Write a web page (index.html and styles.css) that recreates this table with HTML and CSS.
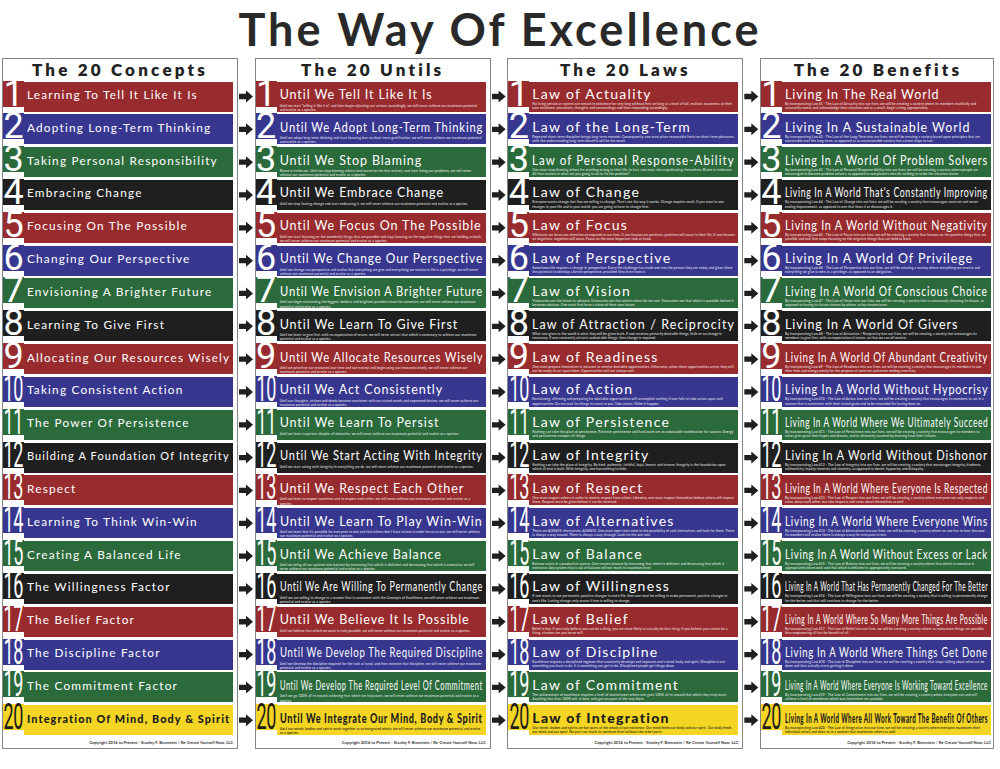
FILE: index.html
```html
<!DOCTYPE html>
<html lang="en">
<head>
<meta charset="utf-8">
<title>The Way Of Excellence</title>
<link rel="stylesheet" href="styles.css">
</head>
<body>
<h1 class="title">The Way Of Excellence</h1>
<div class="poster">

<section class="panel concepts">
<h2 class="ph">The 20 Concepts</h2>
<div class="rows">
<div class="row red"><div class="num">1</div><div class="body"><div class="t">Learning To Tell It Like It Is</div></div></div>
<div class="row blue"><div class="num">2</div><div class="body"><div class="t">Adopting Long-Term Thinking</div></div></div>
<div class="row green"><div class="num">3</div><div class="body"><div class="t">Taking Personal Responsibility</div></div></div>
<div class="row black"><div class="num">4</div><div class="body"><div class="t">Embracing Change</div></div></div>
<div class="row red"><div class="num">5</div><div class="body"><div class="t">Focusing On The Possible</div></div></div>
<div class="row blue"><div class="num">6</div><div class="body"><div class="t">Changing Our Perspective</div></div></div>
<div class="row green"><div class="num">7</div><div class="body"><div class="t">Envisioning A Brighter Future</div></div></div>
<div class="row black"><div class="num">8</div><div class="body"><div class="t">Learning To Give First</div></div></div>
<div class="row red"><div class="num">9</div><div class="body"><div class="t">Allocating Our Resources Wisely</div></div></div>
<div class="row blue"><div class="num n2"><span>10</span></div><div class="body"><div class="t">Taking Consistent Action</div></div></div>
<div class="row green"><div class="num n2"><span>11</span></div><div class="body"><div class="t">The Power Of Persistence</div></div></div>
<div class="row black"><div class="num n2"><span>12</span></div><div class="body"><div class="t">Building A Foundation Of Integrity</div></div></div>
<div class="row red"><div class="num n2"><span>13</span></div><div class="body"><div class="t">Respect</div></div></div>
<div class="row blue"><div class="num n2"><span>14</span></div><div class="body"><div class="t">Learning To Think Win-Win</div></div></div>
<div class="row green"><div class="num n2"><span>15</span></div><div class="body"><div class="t">Creating A Balanced Life</div></div></div>
<div class="row black"><div class="num n2"><span>16</span></div><div class="body"><div class="t">The Willingness Factor</div></div></div>
<div class="row red"><div class="num n2"><span>17</span></div><div class="body"><div class="t">The Belief Factor</div></div></div>
<div class="row blue"><div class="num n2"><span>18</span></div><div class="body"><div class="t">The Discipline Factor</div></div></div>
<div class="row green"><div class="num n2"><span>19</span></div><div class="body"><div class="t">The Commitment Factor</div></div></div>
<div class="row yellow"><div class="num n2"><span>20</span></div><div class="body"><div class="t">Integration Of Mind, Body &amp; Spirit</div></div></div>
</div>
<p class="copy">Copyright 2016 to Present - Stanley F. Bronstein / Re-Create Yourself Now, LLC</p>
</section>

<div class="arrows">
<i></i><i></i><i></i><i></i><i></i><i></i><i></i><i></i><i></i><i></i>
<i></i><i></i><i></i><i></i><i></i><i></i><i></i><i></i><i></i><i></i>
</div>

<section class="panel untils">
<h2 class="ph">The 20 Untils</h2>
<div class="rows">
<div class="row red"><div class="num">1</div><div class="body"><div class="t">Until We Tell It Like It Is</div><p class="d">Until we start "telling it like it is" and then begin adjusting our actions accordingly, we will never achieve our maximum potential and evolve as a species.</p></div></div>
<div class="row blue"><div class="num">2</div><div class="body"><div class="t">Until We Adopt Long-Term Thinking</div><p class="d">Until we adopt long-term thinking and start focusing less on short-term gratification, we will never achieve our maximum potential and evolve as a species.</p></div></div>
<div class="row green"><div class="num">3</div><div class="body"><div class="t">Until We Stop Blaming</div><p class="d">Blame is irrelevant. Until we stop blaming others (and ourselves for that matter), and start fixing our problems, we will never achieve our maximum potential and evolve as a species.</p></div></div>
<div class="row black"><div class="num">4</div><div class="body"><div class="t">Until We Embrace Change</div><p class="d">Until we stop fearing change and start embracing it, we will never achieve our maximum potential and evolve as a species.</p></div></div>
<div class="row red"><div class="num">5</div><div class="body"><div class="t">Until We Focus On The Possible</div><p class="d">Until we start focusing on the wonderful things that are possible and stop focusing on the negative things that are holding us back, we will never achieve our maximum potential and evolve as a species.</p></div></div>
<div class="row blue"><div class="num">6</div><div class="body"><div class="t">Until We Change Our Perspective</div><p class="d">Until we change our perspective and realize that everything we give and everything we receive in life is a privilege, we will never achieve our maximum potential and evolve as a species.</p></div></div>
<div class="row green"><div class="num">7</div><div class="body"><div class="t">Until We Envision A Brighter Future</div><p class="d">Until we begin envisioning the biggest, boldest and brightest possible future for ourselves, we will never achieve our maximum potential and evolve as a species.</p></div></div>
<div class="row black"><div class="num">8</div><div class="body"><div class="t">Until We Learn To Give First</div><p class="d">Until we learn to give first, with no expectation of return, we will never attract that which is necessary to achieve our maximum potential and evolve as a species.</p></div></div>
<div class="row red"><div class="num">9</div><div class="body"><div class="t">Until We Allocate Resources Wisely</div><p class="d">Until we prioritize our resources (our time and our money) and begin using our resources wisely, we will never achieve our maximum potential and evolve as a species.</p></div></div>
<div class="row blue"><div class="num n2"><span>10</span></div><div class="body"><div class="t">Until We Act Consistently</div><p class="d">Until our thoughts, actions and deeds become consistent with our stated words and expressed desires, we will never achieve our maximum potential and evolve as a species.</p></div></div>
<div class="row green"><div class="num n2"><span>11</span></div><div class="body"><div class="t">Until We Learn To Persist</div><p class="d">Until we learn to persist, despite all obstacles, we will never achieve our maximum potential and evolve as a species.</p></div></div>
<div class="row black"><div class="num n2"><span>12</span></div><div class="body"><div class="t">Until We Start Acting With Integrity</div><p class="d">Until we start acting with integrity in everything we do, we will never achieve our maximum potential and evolve as a species.</p></div></div>
<div class="row red"><div class="num n2"><span>13</span></div><div class="body"><div class="t">Until We Respect Each Other</div><p class="d">Until we learn to respect ourselves and to respect each other, we will never achieve our maximum potential and evolve as a species.</p></div></div>
<div class="row blue"><div class="num n2"><span>14</span></div><div class="body"><div class="t">Until We Learn To Play Win-Win</div><p class="d">Until we learn that it's possible for everyone to win and that others don't have to lose in order for us to win, we will never achieve our maximum potential and evolve as a species.</p></div></div>
<div class="row green"><div class="num n2"><span>15</span></div><div class="body"><div class="t">Until We Achieve Balance</div><p class="d">Until we bring all our systems into balance by increasing that which is deficient and decreasing that which is excessive, we will never achieve our maximum potential and evolve as a species.</p></div></div>
<div class="row black"><div class="num n2"><span>16</span></div><div class="body"><div class="t">Until We Are Willing To Permanently Change</div><p class="d">Until we are willing to change in a manner that is consistent with the Concepts of Excellence, we will never achieve our maximum potential and evolve as a species.</p></div></div>
<div class="row red"><div class="num n2"><span>17</span></div><div class="body"><div class="t">Until We Believe It Is Possible</div><p class="d">Until we believe that which we want is truly possible, we will never achieve our maximum potential and evolve as a species.</p></div></div>
<div class="row blue"><div class="num n2"><span>18</span></div><div class="body"><div class="t">Until We Develop The Required Discipline</div><p class="d">Until we develop the discipline required for the task at hand, and then exercise that discipline, we will never achieve our maximum potential and evolve as a species.</p></div></div>
<div class="row green"><div class="num n2"><span>19</span></div><div class="body"><div class="t">Until We Develop The Required Level Of Commitment</div><p class="d">Until we go 100% all-in toward achieving that which we truly want, we will never achieve our maximum potential and evolve as a species.</p></div></div>
<div class="row yellow"><div class="num n2"><span>20</span></div><div class="body"><div class="t">Until We Integrate Our Mind, Body &amp; Spirit</div><p class="d">Until our minds, bodies and spirits work together as an integrated whole, we will never achieve our maximum potential and evolve as a species.</p></div></div>
</div>
<p class="copy">Copyright 2016 to Present - Stanley F. Bronstein / Re-Create Yourself Now, LLC</p>
</section>

<div class="arrows">
<i></i><i></i><i></i><i></i><i></i><i></i><i></i><i></i><i></i><i></i>
<i></i><i></i><i></i><i></i><i></i><i></i><i></i><i></i><i></i><i></i>
</div>

<section class="panel laws">
<h2 class="ph">The 20 Laws</h2>
<div class="rows">
<div class="row red"><div class="num">1</div><div class="body"><div class="t">Law of Actuality</div><p class="d">No living person or system can remain in existence for very long without first arriving at a level of full, realistic awareness of their own existence, sensations, thoughts and surroundings and then responding accordingly.</p></div></div>
<div class="row blue"><div class="num">2</div><div class="body"><div class="t">Law of the Long-Term</div><p class="d">Repeated short-term discipline brings long-term rewards. Consequently, one must place reasonable limits on short-term pleasures, with the understanding long-term benefits will be the result.</p></div></div>
<div class="row green"><div class="num">3</div><div class="body"><div class="t">Law of Personal Response-Ability</div><p class="d">One must stop blaming others for anything wrong in their life. In fact, one must also stop blaming themselves. Blame is irrelevant. All that matters is what are you going to do to fix the problem?</p></div></div>
<div class="row black"><div class="num">4</div><div class="body"><div class="t">Law of Change</div><p class="d">Everyone wants change, but few are willing to change. That's not the way it works. Change requires work. If you want to see changes in your life and in your world, you are going to have to change first.</p></div></div>
<div class="row red"><div class="num">5</div><div class="body"><div class="t">Law of Focus</div><p class="d">Whatever we focus our attention on expands in our lives. If one focuses on positives, positives will occur in their life. If one focuses on negatives, negatives will occur. Focus on the most important task at hand.</p></div></div>
<div class="row blue"><div class="num">6</div><div class="body"><div class="t">Law of Perspective</div><p class="d">Sometimes life requires a change in perspective. Every life challenge has made one into the person they are today and given them the potential to develop a better perspective, provided they learn from it.</p></div></div>
<div class="row green"><div class="num">7</div><div class="body"><div class="t">Law of Vision</div><p class="d">Visionaries see the future in advance. Visionaries see that which others do not see. Visionaries see that which is possible, before it becomes obvious. One must first form a vision of their own future.</p></div></div>
<div class="row black"><div class="num">8</div><div class="body"><div class="t">Law of Attraction / Reciprocity</div><p class="d">What one gives to the world is what they will be given back. If one receives primarily desirable things, little or no change is necessary. If one constantly attracts undesirable things, then change is required.</p></div></div>
<div class="row red"><div class="num">9</div><div class="body"><div class="t">Law of Readiness</div><p class="d">One must prepare themselves in advance to receive desirable opportunities. Otherwise, when those opportunities arrive, they will not be ready to act upon them. Opportunities will not always wait.</p></div></div>
<div class="row blue"><div class="num n2"><span>10</span></div><div class="body"><div class="t">Law of Action</div><p class="d">Envisioning, affirming and preparing for desirable opportunities will accomplish nothing if one fails to take action upon said opportunities. Do not wait for things to come to you. Take action. Make it happen.</p></div></div>
<div class="row green"><div class="num n2"><span>11</span></div><div class="body"><div class="t">Law of Persistence</div><p class="d">Nothing can take the place of persistence. Patience, persistence and hard work are an unbeatable combination for success. Energy and persistence conquer all things.</p></div></div>
<div class="row black"><div class="num n2"><span>12</span></div><div class="body"><div class="t">Law of Integrity</div><p class="d">Nothing can take the place of integrity. Be kind, authentic, faithful, loyal, honest and sincere. Integrity is the foundation upon which all else is built. With integrity, one has nothing to hide.</p></div></div>
<div class="row red"><div class="num n2"><span>13</span></div><div class="body"><div class="t">Law of Respect</div><p class="d">One must respect others in order to receive respect from others. Likewise, one must respect themselves before others will respect them. Respect must be given before it can be received.</p></div></div>
<div class="row blue"><div class="num n2"><span>14</span></div><div class="body"><div class="t">Law of Alternatives</div><p class="d">There are ALWAYS alternatives. ALWAYS. One must open their mind to the possibility of said alternatives and look for them. There is always a way around. There is always a way through. Look for the win-win.</p></div></div>
<div class="row green"><div class="num n2"><span>15</span></div><div class="body"><div class="t">Law of Balance</div><p class="d">Balance exists in a productive system. One creates balance by increasing that which is deficient and decreasing that which is excessive. Any system that is out of balance will not reach its maximum level.</p></div></div>
<div class="row black"><div class="num n2"><span>16</span></div><div class="body"><div class="t">Law of Willingness</div><p class="d">If one wants to see permanent, positive changes in one's life, then one must be willing to make permanent, positive changes in one's life. Lasting change only occurs if one is willing to change.</p></div></div>
<div class="row red"><div class="num n2"><span>17</span></div><div class="body"><div class="t">Law of Belief</div><p class="d">Belief is key. If you truly believe you can do a thing, you are more likely to actually do that thing. If you believe you cannot do a thing, chances are you never will.</p></div></div>
<div class="row blue"><div class="num n2"><span>18</span></div><div class="body"><div class="t">Law of Discipline</div><p class="d">Excellence requires a disciplined regimen that constantly develops and improves one's mind, body and spirit. Discipline is not something you have to do. It is something you get to do. Disciplined people get things done.</p></div></div>
<div class="row green"><div class="num n2"><span>19</span></div><div class="body"><div class="t">Law of Commitment</div><p class="d">The achievement of excellence requires a level of commitment where one goes 100% all-in toward that which they truly want. Anything less than 100% will, at best, only get you part of the way there.</p></div></div>
<div class="row yellow"><div class="num n2"><span>20</span></div><div class="body"><div class="t">Law of Integration</div><p class="d">Our minds, bodies and spirits are but parts of the whole of our existence. Our mind feeds our body and our spirit. Our body feeds our mind and our spirit. No part can reach its optimum level without the other parts.</p></div></div>
</div>
<p class="copy">Copyright 2016 to Present - Stanley F. Bronstein / Re-Create Yourself Now, LLC</p>
</section>

<div class="arrows">
<i></i><i></i><i></i><i></i><i></i><i></i><i></i><i></i><i></i><i></i>
<i></i><i></i><i></i><i></i><i></i><i></i><i></i><i></i><i></i><i></i>
</div>

<section class="panel benefits">
<h2 class="ph">The 20 Benefits</h2>
<div class="rows">
<div class="row red"><div class="num">1</div><div class="body"><div class="t">Living In The Real World</div><p class="d">By incorporating Law #1 - The Law of Actuality into our lives, we will be creating a society where its members truthfully and accurately assess and acknowledge their situation and as a result, begin acting appropriately.</p></div></div>
<div class="row blue"><div class="num">2</div><div class="body"><div class="t">Living In A Sustainable World</div><p class="d">By incorporating Law #2 - The Law of the Long-Term into our lives, we will be creating a society based upon principles that are sustainable over the long-term, as opposed to an unsustainable society that cannot hope to last.</p></div></div>
<div class="row green"><div class="num">3</div><div class="body"><div class="t">Living In A World Of Problem Solvers</div><p class="d">By incorporating Law #3 - The Law of Personal Response-Ability into our lives, we will be creating a society where people are encouraged to become problem solvers, as opposed to complainers who do nothing or make the situation worse.</p></div></div>
<div class="row black"><div class="num">4</div><div class="body"><div class="t">Living In A World That's Constantly Improving</div><p class="d">By incorporating Law #4 - The Law of Change into our lives, we will be creating a society that encourages constant and never-ending improvement, as opposed to one that fears it or discourages it.</p></div></div>
<div class="row red"><div class="num">5</div><div class="body"><div class="t">Living In A World Without Negativity</div><p class="d">By incorporating Law #5 - The Law of Focus into our lives, we will be creating a society that focuses on the positive things that are possible and one that stops focusing on the negative things that can hold us back.</p></div></div>
<div class="row blue"><div class="num">6</div><div class="body"><div class="t">Living In A World Of Privilege</div><p class="d">By incorporating Law #6 - The Law of Perspective into our lives, we will be creating a society where everything we receive and everything we give is seen as a privilege, as opposed to an obligation.</p></div></div>
<div class="row green"><div class="num">7</div><div class="body"><div class="t">Living In A World Of Conscious Choice</div><p class="d">By incorporating Law #7 - The Law of Vision into our lives, we will be creating a society that is consciously choosing its future, as opposed to having its future chosen by others, or by circumstance.</p></div></div>
<div class="row black"><div class="num">8</div><div class="body"><div class="t">Living In A World Of Givers</div><p class="d">By incorporating Law #8 - The Law of Attraction / Reciprocity into our lives, we will be creating a society that encourages its members to give first, with no expectation of return, so that we can all receive.</p></div></div>
<div class="row red"><div class="num">9</div><div class="body"><div class="t">Living In A World Of Abundant Creativity</div><p class="d">By incorporating Law #9 - The Law of Readiness into our lives, we will be creating a society that encourages its members to use their time and energy wisely for the purpose of constant and never-ending creativity.</p></div></div>
<div class="row blue"><div class="num n2"><span>10</span></div><div class="body"><div class="t">Living In A World Without Hypocrisy</div><p class="d">By incorporating Law #10 - The Law of Action into our lives, we will be creating a society that encourages its members to act in a manner that is consistent with their stated goals and to be rewarded for having done so.</p></div></div>
<div class="row green"><div class="num n2"><span>11</span></div><div class="body"><div class="t">Living In A World Where We Ultimately Succeed</div><p class="d">By incorporating Law #11 - The Law of Persistence into our lives, we will be creating a society that encourages its members to never give up on their hopes and dreams, and to ultimately succeed by learning from their failures.</p></div></div>
<div class="row black"><div class="num n2"><span>12</span></div><div class="body"><div class="t">Living In A World Without Dishonor</div><p class="d">By incorporating Law #12 - The Law of Integrity into our lives, we will be creating a society that encourages integrity, kindness, authenticity, loyalty, honesty and sincerity, as opposed to deceit, hypocrisy and disloyalty.</p></div></div>
<div class="row red"><div class="num n2"><span>13</span></div><div class="body"><div class="t">Living In A World Where Everyone Is Respected</div><p class="d">By incorporating Law #13 - The Law of Respect into our lives, we will be creating a society where everyone not only respects and cares about each other, but also respects and cares about themselves as well.</p></div></div>
<div class="row blue"><div class="num n2"><span>14</span></div><div class="body"><div class="t">Living In A World Where Everyone Wins</div><p class="d">By incorporating Law #14 - The Law of Alternatives into our lives, we will be creating a society where no one has to lose, because its members will realize there is always a way for everyone to win.</p></div></div>
<div class="row green"><div class="num n2"><span>15</span></div><div class="body"><div class="t">Living In A World Without Excess or Lack</div><p class="d">By incorporating Law #15 - The Law of Balance into our lives, we will be creating a society where that which is excessive is appropriately decreased, and that which is deficient is appropriately increased.</p></div></div>
<div class="row black"><div class="num n2"><span>16</span></div><div class="body"><div class="t">Living In A World That Has Permanently Changed For The Better</div><p class="d">By incorporating Law #16 - The Law of Willingness into our lives, we will be creating a society that is willing to permanently change for the better and that will continue to change for the better.</p></div></div>
<div class="row red"><div class="num n2"><span>17</span></div><div class="body"><div class="t">Living In A World Where So Many More Things Are Possible</div><p class="d">By incorporating Law #17 - The Law of Belief into our lives, we will be creating a society where so many more things are possible, thus empowering all for the benefit of all.</p></div></div>
<div class="row blue"><div class="num n2"><span>18</span></div><div class="body"><div class="t">Living In A World Where Things Get Done</div><p class="d">By incorporating Law #18 - The Law of Discipline into our lives, we will be creating a society that stops talking about what can be done and that actually starts getting it done.</p></div></div>
<div class="row green"><div class="num n2"><span>19</span></div><div class="body"><div class="t">Living In A World Where Everyone Is Working Toward Excellence</div><p class="d">By incorporating Law #19 - The Law of Commitment into our lives, we will be creating a society where everyone can and will achieve a level of excellence which was heretofore not possible.</p></div></div>
<div class="row yellow"><div class="num n2"><span>20</span></div><div class="body"><div class="t">Living In A World Where All Work Toward The Benefit Of Others</div><p class="d">By incorporating Law #20 - The Law of Integration into our lives, we will be creating a society where everyone maximizes their individual selves and does so in a manner that maximizes others as well.</p></div></div>
</div>
<p class="copy">Copyright 2016 to Present - Stanley F. Bronstein / Re-Create Yourself Now, LLC</p>
</section>

</div>
<script src="fit.js"></script>
</body>
</html>
```

FILE: styles.css
```css
* { box-sizing: border-box; }
html, body { margin: 0; padding: 0; background: #fff; }
body {
  width: 1000px;
  height: 769px;
  overflow: hidden;
  font-family: "Lato", "DejaVu Sans", sans-serif;
  color: #222;
}
.title {
  margin: 0;
  height: 58px;
  padding-top: 4px;
  text-align: center;
  font-family: "Lato", sans-serif;
  font-weight: 700;
  font-size: 45px;
  line-height: 50px;
  letter-spacing: 3px;
  color: #292929;
}
.poster {
  display: flex;
  padding-left: 2px;
  align-items: flex-start;
}
.panel {
  width: 236px;
  height: 691px;
  border: 1px solid #858585;
  display: flex;
  flex-direction: column;
  padding-right: 4px;
  flex: none;
  overflow: hidden;
}
.panel.benefits { width: 234px; padding-right: 2px; }
.ph {
  margin: 0;
  height: 22.5px;
  flex: none;
  text-align: center;
  font-family: "Lato", sans-serif;
  font-weight: 800;
  font-size: 17px;
  line-height: 22px;
  letter-spacing: 3.2px;
  color: #222;
  padding-left: 4px;
}
.rows {
  display: grid;
  grid-template-columns: minmax(0, 1fr);
  grid-template-rows: repeat(20, 30px);
  row-gap: 2.84px;
  flex: none;
}
.row {
  display: flex;
  height: 30px;
  min-width: 0;
  color: #fff;
}
.num {
  flex: none;
  width: 21px;
  height: 26px;
  margin-top: -1px;
  display: flex;
  align-items: center;
  justify-content: center;
  font-family: "Roboto", "DejaVu Sans", sans-serif;
  font-weight: 400;
  font-size: 36px;
  line-height: 26px;
  overflow: visible;
}
.num span {
  display: inline-block;
  transform: scaleX(0.5);
  letter-spacing: -1px;
}
.body {
  flex: 1 1 0;
  min-width: 0;
  padding: 1.5px 3px 0 3px;
  overflow: hidden;
}
.t {
  display: inline-block;
  white-space: nowrap;
  transform-origin: 0 50%;
  font-family: "Lato", sans-serif;
  font-weight: 400;
  font-size: 12.5px;
  line-height: 14px;
  letter-spacing: 0.9px;
}
.concepts .t { font-size: 11.8px; letter-spacing: 1.2px; }
.laws .t { font-size: 14px; letter-spacing: 1.3px; line-height: 14px; }
.d {
  margin: 0;
  font-family: "Lato", sans-serif;
  font-weight: 700;
  font-size: 3.4px;
  line-height: 4.1px;
  letter-spacing: 0.05px;
  color: rgba(255,255,255,0.72);
}
.untils .d { margin-top: 1.5px; }
.red .num, .red .body { background: #982b2d; }
.blue .num, .blue .body { background: #37378f; }
.green .num, .green .body { background: #2b6a3b; }
.black .num, .black .body { background: #1f1f1f; }
.yellow .num, .yellow .body { background: #f5d523; }
.yellow { color: #1c1c1c; }
.yellow .t { font-weight: 900; }
.yellow .d { color: rgba(20,20,20,0.85); }
.copy {
  margin: 0;
  padding-top: 4.5px;
  text-align: right;
  font-family: "Lato", sans-serif;
  font-weight: 700;
  font-size: 4.1px;
  line-height: 5px;
  color: #333;
}
.arrows {
  flex: none;
  width: 16.67px;
  padding-top: 23.5px;
  display: grid;
  grid-template-rows: repeat(20, 30px);
  row-gap: 2.84px;
}
.arrows i {
  display: block;
  width: 14px;
  height: 12px;
  margin: 9px 0 0 1px;
  background: #1f1f1f;
  clip-path: polygon(0 28%, 50% 28%, 50% 0, 100% 50%, 50% 100%, 50% 72%, 0 72%);
}
```

FILE: fit.js
```js
document.querySelectorAll('.t').forEach(function (el) {
  var box = el.parentElement;
  var avail = box.clientWidth - 6;
  var w = el.scrollWidth;
  if (w > avail) {
    el.style.transform = 'scaleX(' + (avail / w).toFixed(3) + ')';
  }
});
```
